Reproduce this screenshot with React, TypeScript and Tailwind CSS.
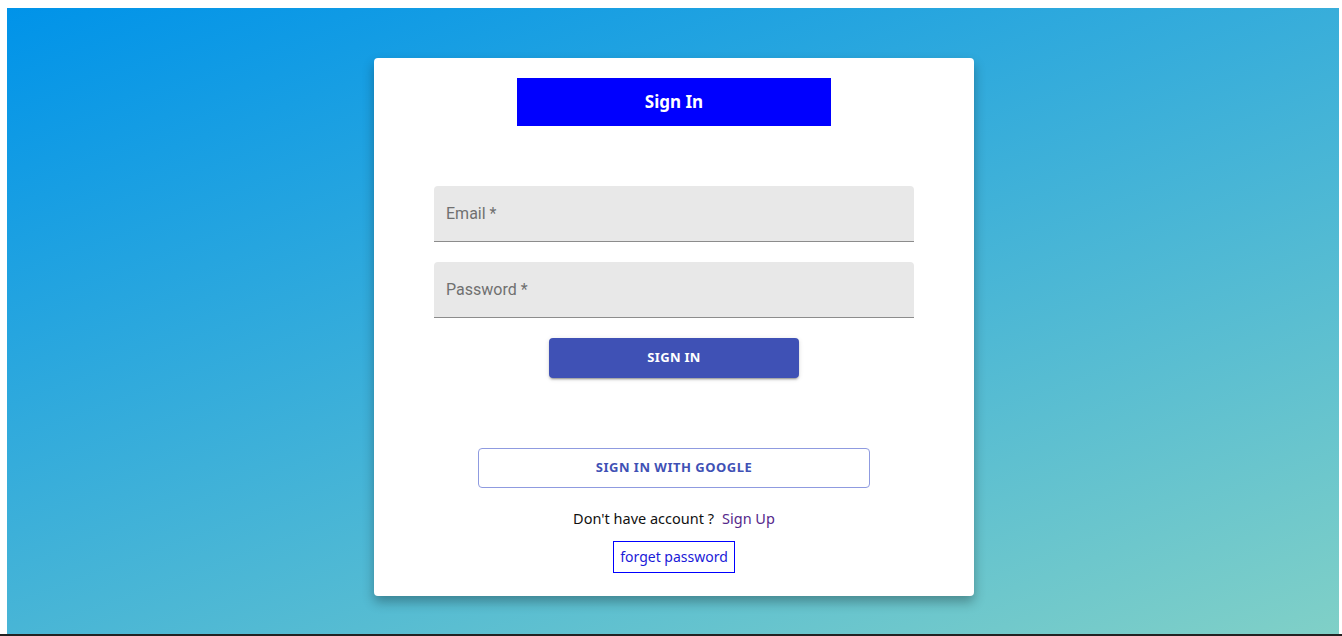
import React from "react";

export default function App() {
  const font = { fontFamily: '"Noto Sans", "DejaVu Sans", sans-serif' };
  return (
    <div className="w-[1342px] h-[636px] bg-white flex flex-col overflow-hidden" style={font}>
      <div className="flex-1 pl-[7px] pt-[8px] pr-[3px] flex">
        <div className="flex-1 bg-[#0093E9] bg-[linear-gradient(160deg,#0093E9_0%,#80D0C7_100%)] flex justify-center pt-[50px] pl-[2px]">
          <div className="w-[600px] h-[538px] bg-white rounded-[4px] shadow-[0_6px_12px_rgba(0,0,0,0.3)] flex flex-col items-center pt-[20px]">
            <div className="w-[314px] h-[48px] bg-[#0000ff] text-white flex items-center justify-center text-[17px] font-bold">
              Sign In
            </div>
            <div className="mt-[60px] w-[480px] h-[56px] bg-[#e8e8e8] border-b border-[#8c8c8c] rounded-t-[4px] flex items-center px-[12px] text-[16px] text-[#707070]" style={{ fontFamily: 'Roboto, sans-serif' }}>
              Email *
            </div>
            <div className="mt-[20px] w-[480px] h-[56px] bg-[#e8e8e8] border-b border-[#8c8c8c] rounded-t-[4px] flex items-center px-[12px] text-[16px] text-[#707070]" style={{ fontFamily: 'Roboto, sans-serif' }}>
              Password *
            </div>
            <button className="mt-[20px] w-[250px] h-[40px] bg-[#3f51b5] text-white rounded-[4px] text-[13px] font-bold tracking-[0.3px] shadow-[0_3px_1px_-2px_rgba(0,0,0,0.2),0_2px_2px_0_rgba(0,0,0,0.14),0_1px_5px_0_rgba(0,0,0,0.12)]">
              SIGN IN
            </button>
            <button className="mt-[70px] w-[392px] h-[40px] border border-[#8f9be0] rounded-[4px] text-[#3f51b5] text-[13px] font-bold tracking-[0.5px] bg-white">
              SIGN IN WITH GOOGLE
            </button>
            <div className="mt-[20px] text-[14.5px] text-[#111] flex items-center">
              <span>Don't have account ?</span>
              <span className="ml-[8px] text-[#55288b]">Sign Up</span>
            </div>
            <div className="mt-[11px] border border-[#0000ff] px-[6px] h-[32px] flex items-center text-[14px] text-[#1a1ad8]">
              forget password
            </div>
          </div>
        </div>
      </div>
      <div className="h-[2px] bg-[#222]" />
    </div>
  );
}
